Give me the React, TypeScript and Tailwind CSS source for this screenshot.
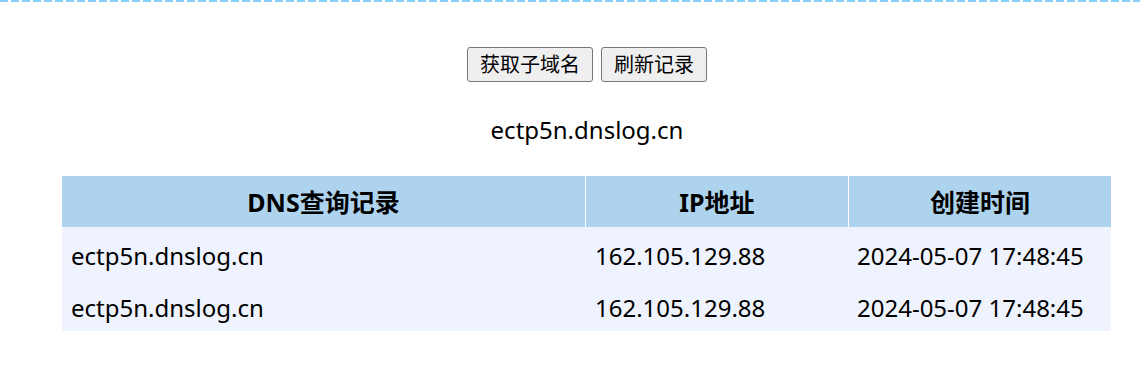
import React from 'react';

const rows = [
  { domain: 'ectp5n.dnslog.cn', ip: '162.105.129.88', time: '2024-05-07 17:48:45' },
  { domain: 'ectp5n.dnslog.cn', ip: '162.105.129.88', time: '2024-05-07 17:48:45' },
];

export default function App() {
  return (
    <div
      className="w-[1140px] h-[382px] bg-white text-black overflow-hidden"
      style={{ fontFamily: '"Noto Sans", "Noto Sans CJK SC", sans-serif' }}
    >
      {/* dashed divider */}
      <div className="h-[2px] w-full bg-[repeating-linear-gradient(to_right,#87cefa_0,#87cefa_8px,transparent_8px,transparent_11px)]" />

      <div className="w-[1174px]">
        <div className="flex justify-center gap-2 mt-[45px]">
          <button className="h-[35px] px-[12px] text-[20px] leading-none bg-[#efefef] border border-[#767676] rounded-[3px]">
            获取子域名
          </button>
          <button className="h-[35px] px-[12px] text-[20px] leading-none bg-[#efefef] border border-[#767676] rounded-[3px]">
            刷新记录
          </button>
        </div>

        <p className="text-center text-[24px] leading-none mt-[36px]">ectp5n.dnslog.cn</p>

        <div className="ml-[62px] mt-[34px] w-[1049px]">
          <div className="grid grid-cols-[524px_263px_262px] bg-[#aed3ee] h-[51px] text-[25px] font-bold">
            <div className="flex items-center justify-center pt-[3px] border-r border-white">DNS查询记录</div>
            <div className="flex items-center justify-center pt-[3px] border-r border-white">IP地址</div>
            <div className="flex items-center justify-center pt-[3px]">创建时间</div>
          </div>
          {rows.map((r, i) => (
            <div key={i} className="grid grid-cols-[524px_263px_262px] bg-[#eef3fd] h-[52px] text-[24px] items-center pt-[5px]">
              <div className="pl-[9px]">{r.domain}</div>
              <div className="pl-[9px]">{r.ip}</div>
              <div className="pl-[8px]">{r.time}</div>
            </div>
          ))}
        </div>
      </div>
    </div>
  );
}
